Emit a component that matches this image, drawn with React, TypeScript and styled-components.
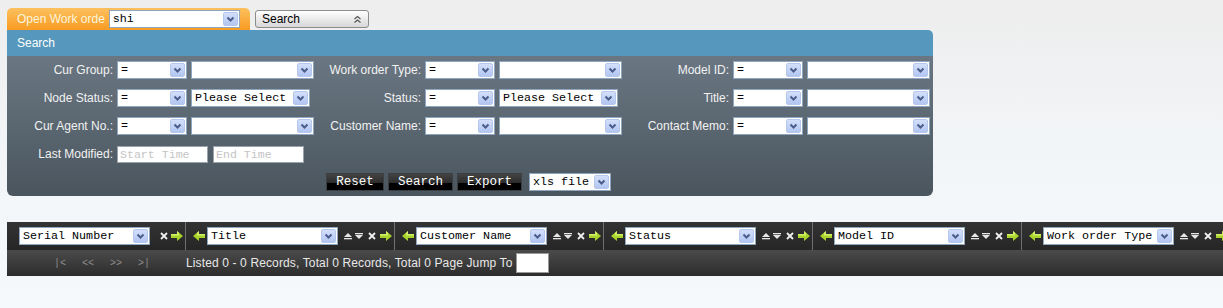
import React from 'react';
import styled, { createGlobalStyle } from 'styled-components';

const GlobalStyle = createGlobalStyle`
  html, body {
    margin: 0;
  }
  body {
    min-height: 308px;
    background: linear-gradient(#ededed, #f3f6f9 55%, #f6f9fc);
    font-family: "Liberation Sans", Arial, sans-serif;
    font-size: 12px;
  }
`;

const Page = styled.div`
  padding: 8px 0 0 7px;
`;

const TabRow = styled.div`
  display: flex;
  align-items: center;
  gap: 5px;
`;

const Tab = styled.div`
  width: 243px;
  height: 22px;
  box-sizing: border-box;
  padding-left: 10px;
  display: flex;
  align-items: center;
  gap: 4px;
  border-radius: 5px 5px 0 0;
  background: linear-gradient(#fcc05e, #f89c22);
  color: #fff5dc;
  white-space: nowrap;
`;

const TopButton = styled.div`
  width: 114px;
  height: 18px;
  box-sizing: border-box;
  padding: 0 6px;
  display: flex;
  align-items: center;
  justify-content: space-between;
  border: 1px solid #8c8c8c;
  border-radius: 3px;
  background: linear-gradient(#ffffff, #e6e6e6 60%, #d8d8d8);
  color: #000;
`;

const Panel = styled.div`
  width: 926px;
  border-radius: 0 5px 6px 6px;
  overflow: hidden;
`;

const PanelHeader = styled.div`
  height: 26px;
  line-height: 26px;
  padding-left: 10px;
  background: #5698bd;
  color: #fff;
`;

const PanelBody = styled.div`
  padding: 5px 0;
  display: grid;
  grid-template-columns: 106px 70px 123px 103px 70px 123px 103px 70px 123px;
  grid-auto-rows: 18px;
  column-gap: 4px;
  row-gap: 10px;
  align-items: center;
  background: linear-gradient(#6a7782, #4a555e);
`;

const Label = styled.div`
  text-align: right;
  color: #f2f2f2;
  white-space: nowrap;
`;

const Pair = styled.div`
  grid-column: span 2;
  display: flex;
  gap: 5px;
`;

const Filler = styled.div<{ $span: number }>`
  grid-column: span ${(p) => p.$span};
`;

const DateInput = styled.div`
  width: 91px;
  height: 17px;
  box-sizing: border-box;
  padding-left: 2px;
  border: 1px solid #9aa4ae;
  background: #fff;
  color: #c4c4c4;
  font-family: "Liberation Mono", monospace;
  font-size: 11.6px;
  line-height: 15px;
`;

const ActionRow = styled.div`
  grid-column: 1 / -1;
  display: flex;
  justify-content: center;
  align-items: center;
  gap: 4px;
`;

const ActionButton = styled.div<{ $w: number }>`
  width: ${(p) => p.$w}px;
  height: 18px;
  box-sizing: border-box;
  border: 1px solid #3a3f44;
  background: linear-gradient(#444 0%, #2c2c2c 55%, #000 55%, #000 100%);
  color: #fff;
  font-family: "Liberation Mono", monospace;
  font-size: 12.5px;
  line-height: 16px;
  text-align: center;
`;

const SelectBox = styled.div<{ $w: number; $gap?: number }>`
  width: ${(p) => p.$w}px;
  height: 18px;
  flex-shrink: 0;
  box-sizing: border-box;
  margin-left: ${(p) => p.$gap ?? 0}px;
  padding-left: 3px;
  display: flex;
  align-items: center;
  border: 1px solid #8ea6c0;
  background: #fff;
  color: #000;
  font-family: "Liberation Mono", monospace;
  font-size: 11.7px;
  white-space: nowrap;
  overflow: hidden;
`;

const SelectText = styled.span`
  flex: 1;
  overflow: hidden;
`;

const SelectArrow = styled.span`
  width: 15px;
  height: 14px;
  margin-right: 1px;
  flex-shrink: 0;
  box-sizing: border-box;
  display: flex;
  align-items: center;
  justify-content: center;
  border: 1px solid #b5c7ee;
  border-radius: 2px;
  background: linear-gradient(#d3dffb, #b3c6f1);
`;

const GridWrap = styled.div`
  margin-top: 26px;
  width: 1216px;
  overflow: hidden;
`;

const HeaderRow = styled.div`
  height: 28px;
  display: flex;
  background: linear-gradient(#333, #262626);
`;

const HeaderCell = styled.div<{ $first?: boolean }>`
  width: ${(p) => (p.$first ? 179 : 209)}px;
  flex-shrink: 0;
  box-sizing: border-box;
  padding-left: ${(p) => (p.$first ? 12 : 7)}px;
  display: flex;
  align-items: center;
  border-right: 1px solid #707070;
`;

const Icon = styled.svg<{ $gap: number }>`
  flex-shrink: 0;
  margin-left: ${(p) => p.$gap}px;
  display: block;
`;

const FooterRow = styled.div`
  height: 26px;
  display: flex;
  align-items: center;
  background: linear-gradient(#4b4b4b, #2c2c2c);
`;

const Pager = styled.div`
  width: 179px;
  box-sizing: border-box;
  padding-left: 47px;
  display: flex;
`;

const PageLink = styled.span`
  width: 28px;
  color: #8e8e8e;
  font-family: "Liberation Mono", monospace;
  font-size: 10px;
`;

const FooterText = styled.span`
  color: #e8e8e8;
  white-space: nowrap;
  letter-spacing: 0.13px;
`;

const JumpInput = styled.div`
  width: 33px;
  height: 20px;
  margin-left: 3px;
  box-sizing: border-box;
  border: 1px solid #9a9a9a;
  background: #fff;
`;

const Chevron = () => (
  <svg width="9" height="7" viewBox="0 0 9 7">
    <polyline points="1.5,1.5 4.5,4.5 7.5,1.5" fill="none" stroke="#4a5d8c" strokeWidth="2" />
  </svg>
);

const Select = ({ w, text = '', gap }: { w: number; text?: string; gap?: number }) => (
  <SelectBox $w={w} $gap={gap}>
    <SelectText>{text}</SelectText>
    <SelectArrow>
      <Chevron />
    </SelectArrow>
  </SelectBox>
);

const ArrowRight = ({ gap }: { gap: number }) => (
  <Icon $gap={gap} width="12" height="10" viewBox="0 0 12 10">
    <path d="M0 3 H6 V0 L12 5 L6 10 V7 H0 Z" fill="#a9d42c" />
    <path d="M0 3 H6 V0 L8 2 V4.5 H0 Z" fill="#d3ef6a" />
  </Icon>
);

const ArrowLeft = ({ gap }: { gap: number }) => (
  <Icon $gap={gap} width="12" height="10" viewBox="0 0 12 10">
    <path d="M12 3 H6 V0 L0 5 L6 10 V7 H12 Z" fill="#a9d42c" />
    <path d="M12 3 H6 V0 L4 2 V4.5 H12 Z" fill="#d3ef6a" />
  </Icon>
);

const SortUp = ({ gap }: { gap: number }) => (
  <Icon $gap={gap} width="8" height="8" viewBox="0 0 8 8">
    <polygon points="0,5 4,1 8,5" fill="#e6e6e6" />
    <rect x="0" y="6" width="8" height="1.3" fill="#e6e6e6" />
  </Icon>
);

const SortDown = ({ gap }: { gap: number }) => (
  <Icon $gap={gap} width="8" height="8" viewBox="0 0 8 8">
    <rect x="0" y="1" width="8" height="1.3" fill="#e6e6e6" />
    <polygon points="0,3 8,3 4,7" fill="#e6e6e6" />
  </Icon>
);

const Close = ({ gap }: { gap: number }) => (
  <Icon $gap={gap} width="8" height="8" viewBox="0 0 8 8">
    <path d="M1 1 L7 7 M7 1 L1 7" stroke="#f0f0f0" strokeWidth="1.8" />
  </Icon>
);

const columns = ['Title', 'Customer Name', 'Status', 'Model ID', 'Work order Type'];

const filterRows = [
  ['Cur Group:', 'Work order Type:', 'Model ID:'],
  ['Node Status:', 'Status:', 'Title:'],
  ['Cur Agent No.:', 'Customer Name:', 'Contact Memo:'],
];

const App = () => (
  <>
    <GlobalStyle />
    <Page>
      <TabRow>
        <Tab>
          Open Work orde
          <Select w={131} text="shi" />
        </Tab>
        <TopButton>
          <span>Search</span>
          <svg width="9" height="9" viewBox="0 0 9 9">
            <polyline points="1.5,4 4.5,1.5 7.5,4" fill="none" stroke="#555" strokeWidth="1.2" />
            <polyline points="1.5,7.5 4.5,5 7.5,7.5" fill="none" stroke="#555" strokeWidth="1.2" />
          </svg>
        </TopButton>
      </TabRow>

      <Panel>
        <PanelHeader>Search</PanelHeader>
        <PanelBody>
          {filterRows.map((row) =>
            row.map((label) => (
              <React.Fragment key={label}>
                <Label>{label}</Label>
                <Select w={70} text="=" />
                {label === 'Node Status:' || label === 'Status:' ? (
                  <Select w={119} text="Please Select" />
                ) : (
                  <Select w={123} />
                )}
              </React.Fragment>
            ))
          )}
          <Label>Last Modified:</Label>
          <Pair>
            <DateInput>Start Time</DateInput>
            <DateInput>End Time</DateInput>
          </Pair>
          <Filler $span={6} />
          <ActionRow>
            <ActionButton $w={58}>Reset</ActionButton>
            <ActionButton $w={65}>Search</ActionButton>
            <ActionButton $w={65}>Export</ActionButton>
            <Select w={82} text="xls file" gap={3} />
          </ActionRow>
        </PanelBody>
      </Panel>

      <GridWrap>
        <HeaderRow>
          <HeaderCell $first>
            <Select w={131} text="Serial Number" />
            <Close gap={10} />
            <ArrowRight gap={3} />
          </HeaderCell>
          {columns.map((name) => (
            <HeaderCell key={name}>
              <ArrowLeft gap={0} />
              <Select w={131} text={name} gap={2} />
              <SortUp gap={6} />
              <SortDown gap={3} />
              <Close gap={5} />
              <ArrowRight gap={4} />
            </HeaderCell>
          ))}
        </HeaderRow>
        <FooterRow>
          <Pager>
            <PageLink>|&lt;</PageLink>
            <PageLink>&lt;&lt;</PageLink>
            <PageLink>&gt;&gt;</PageLink>
            <PageLink>&gt;|</PageLink>
          </Pager>
          <FooterText>Listed 0 - 0 Records, Total 0 Records, Total 0 Page Jump To</FooterText>
          <JumpInput />
        </FooterRow>
      </GridWrap>
    </Page>
  </>
);

export default App;
